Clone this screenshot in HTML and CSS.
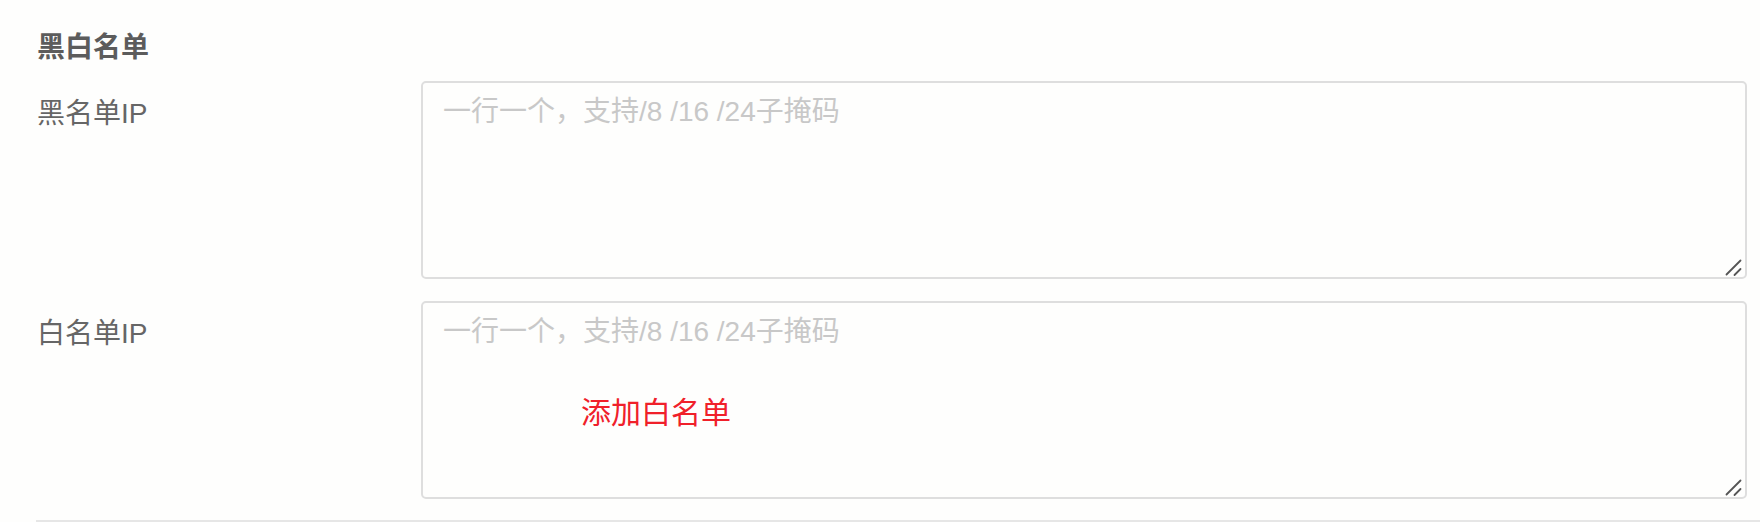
FILE: index.html
```html
<!DOCTYPE html>
<html lang="zh-CN">
<head>
<meta charset="utf-8">
<title>黑白名单</title>
<link rel="stylesheet" href="styles.css">
</head>
<body>
<section class="panel">
  <h2 class="title">黑白名单</h2>
  <div class="row">
    <label class="label" for="black">黑名单IP</label>
    <div class="field">
      <textarea id="black" class="input" placeholder="一行一个，支持/8 /16 /24子掩码"></textarea>
      <svg class="grip" width="20" height="20" viewBox="0 0 20 20" aria-hidden="true">
        <path d="M1.5 17.5 L15.5 3.5 M9.5 18 L15.5 12" stroke="#555" stroke-width="1.8" stroke-linecap="round" fill="none"/>
      </svg>
    </div>
  </div>
  <div class="row">
    <label class="label" for="white">白名单IP</label>
    <div class="field">
      <textarea id="white" class="input" placeholder="一行一个，支持/8 /16 /24子掩码"></textarea>
      <svg class="grip" width="20" height="20" viewBox="0 0 20 20" aria-hidden="true">
        <path d="M1.5 17.5 L15.5 3.5 M9.5 18 L15.5 12" stroke="#555" stroke-width="1.8" stroke-linecap="round" fill="none"/>
      </svg>
      <span class="hint">添加白名单</span>
    </div>
  </div>
  <div class="divider"></div>
</section>
</body>
</html>
```
FILE: styles.css
```css
html, body {
  margin: 0;
  padding: 0;
  background: #fefefd;
}
body {
  font-family: "Liberation Sans", "Noto Sans CJK SC", sans-serif;
  color: #666;
}
.panel {
  padding-top: 28px;
}
.title {
  margin: 0 0 13px 37px;
  font-size: 28px;
  line-height: 40px;
  font-weight: bold;
  color: #5c5c5c;
}
.row {
  display: flex;
  margin: 0 13px 22px 37px;
}
.label {
  width: 384px;
  flex: none;
  padding-top: 13px;
  font-size: 28px;
  line-height: 40px;
  color: #666;
}
.field {
  flex: 1;
  position: relative;
  display: flex;
}
.input {
  flex: 1;
  box-sizing: border-box;
  height: 198px;
  margin: 0;
  padding: 9px 20px;
  border: 2px solid #dedede;
  border-radius: 5px;
  background: #fefefd;
  font-family: "Liberation Sans", "Noto Sans CJK SC", sans-serif;
  font-size: 28px;
  line-height: 40px;
  color: #555;
  resize: vertical;
  outline: none;
}
.input::-webkit-resizer {
  background: transparent;
  border: none;
}
.input::placeholder {
  color: #c8c8c8;
}
.grip {
  position: absolute;
  right: 2px;
  bottom: 2px;
  pointer-events: none;
}
.hint {
  position: absolute;
  left: 160px;
  top: 92px;
  font-size: 30px;
  line-height: 40px;
  color: #f0202a;
}
.divider {
  margin-left: 36px;
  height: 2px;
  background: #e6e6e6;
  margin-top: -1px;
}
```
